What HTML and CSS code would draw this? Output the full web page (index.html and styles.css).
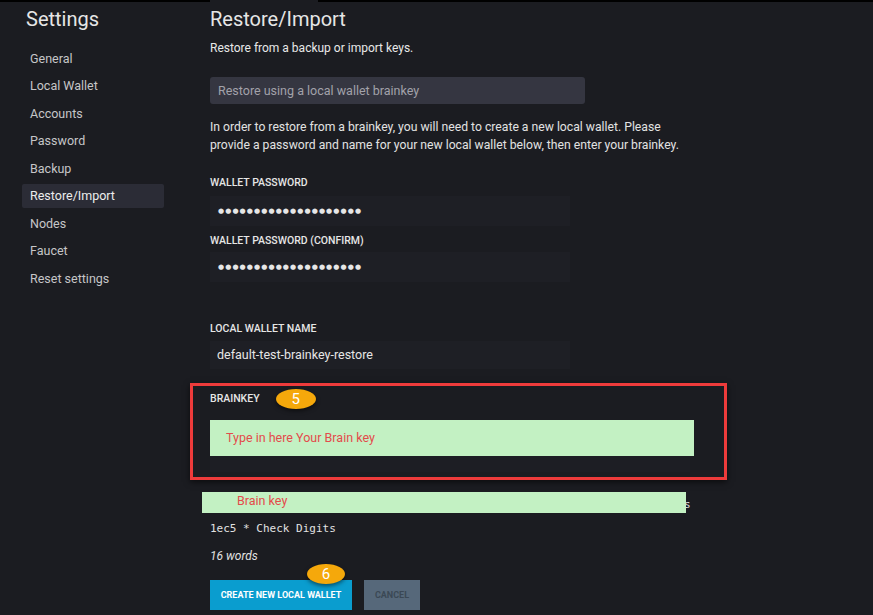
FILE: index.html
```html
<!DOCTYPE html>
<html>
<head>
<meta charset="utf-8">
<link rel="stylesheet" href="styles.css">
</head>
<body>
<div class="topbar"><div class="topbar-gap"></div></div>
<div class="layout">
  <aside class="sidebar">
    <h1 class="side-title">Settings</h1>
    <ul class="nav">
      <li class="nav-item">General</li>
      <li class="nav-item">Local Wallet</li>
      <li class="nav-item">Accounts</li>
      <li class="nav-item">Password</li>
      <li class="nav-item">Backup</li>
      <li class="nav-item active">Restore/Import</li>
      <li class="nav-item">Nodes</li>
      <li class="nav-item">Faucet</li>
      <li class="nav-item">Reset settings</li>
    </ul>
  </aside>
  <main class="main">
    <h2 class="title">Restore/Import</h2>
    <p class="subtitle">Restore from a backup or import keys.</p>
    <div class="select">Restore using a local wallet brainkey</div>
    <p class="info">In order to restore from a brainkey, you will need to create a new local wallet. Please provide a password and name for your new local wallet below, then enter your brainkey.</p>

    <div class="label l1">WALLET PASSWORD</div>
    <div class="input pw">&#9679;&#9679;&#9679;&#9679;&#9679;&#9679;&#9679;&#9679;&#9679;&#9679;&#9679;&#9679;&#9679;&#9679;&#9679;&#9679;&#9679;&#9679;&#9679;&#9679;</div>
    <div class="label l2">WALLET PASSWORD (CONFIRM)</div>
    <div class="input pw pw2">&#9679;&#9679;&#9679;&#9679;&#9679;&#9679;&#9679;&#9679;&#9679;&#9679;&#9679;&#9679;&#9679;&#9679;&#9679;&#9679;&#9679;&#9679;&#9679;&#9679;</div>

    <div class="label l3">LOCAL WALLET NAME</div>
    <div class="input name">default-test-brainkey-restore</div>

    <section class="brainkey-box">
      <div class="bk-head">
        <span class="label bk-label">BRAINKEY</span>
        <span class="badge">5</span>
      </div>
      <div class="green-input">Type in here Your Brain key</div>
      <div class="textarea-tail"></div>
    </section>

    <div class="mono-row">
      <div class="mono tail">s</div>
      <div class="green-overlay">Brain key</div>
    </div>
    <div class="mono check">1ec5 * Check Digits</div>
    <div class="words">16 words</div>

    <div class="buttons">
      <button class="btn primary">CREATE NEW LOCAL WALLET</button>
      <button class="btn cancel">CANCEL</button>
      <span class="badge badge6">6</span>
    </div>
  </main>
</div>
</body>
</html>
```
FILE: styles.css
```css
html, body {
  margin: 0;
  padding: 0;
  background: #1b1c21;
  font-family: Roboto, "Liberation Sans", sans-serif;
  color: #e2e2e2;
  height: 100%;
  overflow: hidden;
}
.topbar {
  height: 2px;
  background: #000;
}
.topbar-gap {
  margin-left: 210px;
  width: 108px;
  height: 2px;
  background: #1b1c21;
}
.layout {
  display: flex;
}
.sidebar {
  width: 188px;
  padding-left: 22px;
  flex: none;
}
.side-title {
  margin: 5px 0 0 4px;
  font-size: 20px;
  line-height: 24px;
  font-weight: 400;
  color: #e6e6e6;
}
.nav {
  list-style: none;
  margin: 16px 0 0 0;
  padding: 0;
}
.nav-item {
  width: 142px;
  box-sizing: border-box;
  height: 24px;
  line-height: 24px;
  padding-left: 8px;
  margin-bottom: 3.45px;
  font-size: 12.5px;
  color: #c6c6c8;
  border-radius: 2px;
}
.nav-item.active {
  background: #2b2c36;
  color: #ececec;
}
.main {
  flex: 1;
}
.title {
  margin: 5px 0 0 0;
  font-size: 20px;
  line-height: 24px;
  font-weight: 400;
  color: #e6e6e6;
}
.subtitle {
  margin: 8px 0 0 0;
  font-size: 12px;
  line-height: 18px;
  color: #e8e8e8;
}
.select {
  margin-top: 20px;
  width: 375px;
  height: 27px;
  box-sizing: border-box;
  padding-left: 8px;
  line-height: 27px;
  background: #353641;
  border-radius: 3px;
  font-size: 12.5px;
  color: #a2a2aa;
}
.info {
  margin: 14px 0 0 0;
  width: 482px;
  font-size: 12.2px;
  line-height: 18px;
  color: #e2e2e2;
}
.label {
  font-size: 10.5px;
  font-weight: 500;
  line-height: 14px;
  color: #e6e6e6;
}
.l1 { margin-top: 22px; }
.l2 { margin-top: 8px; }
.l3 { margin-top: 40px; }
.input {
  width: 360px;
  height: 30px;
  box-sizing: border-box;
  background: #1e1f25;
  padding-left: 7px;
  line-height: 30px;
  font-size: 12.5px;
  color: #e6e6e6;
}
.pw {
  margin-top: 6px;
  font-family: "DejaVu Sans", sans-serif;
  font-size: 7px;
  letter-spacing: 1.1px;
  padding-left: 8px;
}
.pw2 { margin-top: 4px; }
.name {
  margin-top: 5px;
  height: 28px;
  line-height: 28px;
}
.brainkey-box {
  margin-top: 14px;
  margin-left: -20px;
  width: 537px;
  height: 97px;
  box-sizing: border-box;
  border: 3px solid #ee3b3b;
  padding: 6px 0 0 17px;
  box-shadow: 0 2px 6px rgba(0,0,0,0.6);
}
.bk-head {
  display: flex;
  align-items: center;
  height: 14px;
}
.badge {
  display: inline-block;
  width: 40px;
  height: 20px;
  border-radius: 50%;
  background: #f5a80b;
  color: #fff;
  font-size: 15px;
  line-height: 20px;
  text-align: center;
  box-shadow: 0 2px 4px rgba(0,0,0,0.5);
}
.bk-head .badge {
  margin-left: 16px;
}
.green-input {
  margin-top: 14px;
  width: 484px;
  height: 36px;
  box-sizing: border-box;
  background: #c3f1c3;
  padding-left: 16px;
  line-height: 36px;
  font-size: 12.5px;
  color: #e34b4b;
}
.textarea-tail {
  width: 480px;
  height: 16px;
  background: #1d1e24;
}
.mono-row {
  position: relative;
  margin-top: 16px;
  height: 18px;
}
.mono {
  font-family: "DejaVu Sans Mono", "Liberation Mono", monospace;
  font-size: 11px;
  line-height: 18px;
  color: #e2e2e2;
  white-space: nowrap;
}
.tail {
  padding-left: 474px;
}
.green-overlay {
  position: absolute;
  left: -8px;
  top: -4px;
  width: 484px;
  height: 21px;
  background: #c3f1c3;
  box-sizing: border-box;
  padding-left: 35px;
  line-height: 18px;
  font-size: 12.5px;
  color: #e34b4b;
}
.check {
  margin-top: 6px;
}
.words {
  margin-top: 9px;
  font-size: 12px;
  line-height: 18px;
  font-style: italic;
  color: #e2e2e2;
}
.buttons {
  position: relative;
  display: flex;
  gap: 12px;
  margin-top: 15px;
}
.btn {
  height: 30px;
  border: none;
  border-radius: 0;
  font-family: Roboto, "Liberation Sans", sans-serif;
  font-weight: 700;
  font-size: 9px;
  padding: 0;
  cursor: pointer;
}
.primary {
  width: 142px;
  background: #0a9dcf;
  color: #ffffff;
}
.cancel {
  width: 56px;
  background: #56687a;
  color: #3b4855;
}
.badge6 {
  position: absolute;
  left: 97px;
  top: -16px;
  width: 38px;
}
```
